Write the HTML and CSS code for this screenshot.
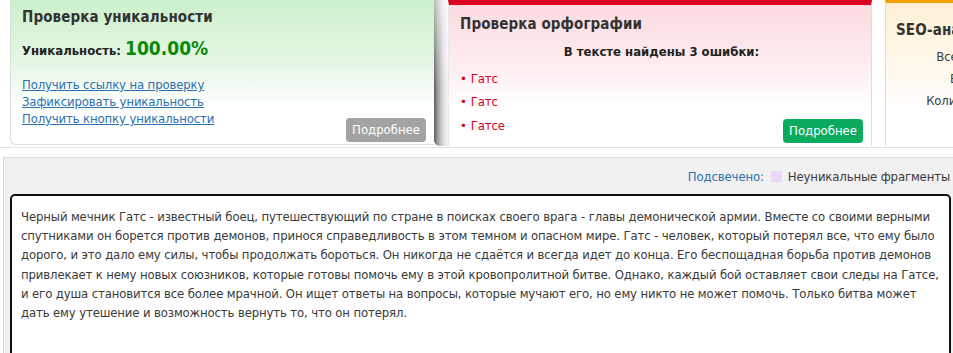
FILE: index.html
```html
<!DOCTYPE html>
<html lang="ru">
<head>
    <meta charset="UTF-8">
    <title>Проверка текста</title>
    <link rel="stylesheet" href="styles.css">
</head>
<body>
    <div class="cards">
        <div class="card card-unique">
            <h2 class="card-title">Проверка уникальности</h2>
            <p class="uniq-line">Уникальность: <span class="uniq-value">100.00%</span></p>
            <div class="card-foot">
                <ul class="links">
                    <li><a href="#">Получить ссылку на проверку</a></li>
                    <li><a href="#">Зафиксировать уникальность</a></li>
                    <li><a href="#">Получить кнопку уникальности</a></li>
                </ul>
                <a href="#" class="more-btn more-gray">Подробнее</a>
            </div>
        </div>

        <div class="card-spell-wrap">
            <div class="fold"></div>
            <div class="card card-spell">
                <h2 class="card-title">Проверка орфографии</h2>
                <p class="errors-head">В тексте найдены 3 ошибки:</p>
                <div class="card-foot">
                    <ul class="errors">
                        <li>Гатс</li>
                        <li>Гатс</li>
                        <li>Гатсе</li>
                    </ul>
                    <a href="#" class="more-btn more-green">Подробнее</a>
                </div>
            </div>
        </div>

        <div class="card card-seo">
            <h2 class="card-title">SEO-анализ</h2>
            <ul class="seo-list">
                <li>Всего символов</li>
                <li>Без пробелов</li>
                <li>Количество слов</li>
            </ul>
        </div>
    </div>

    <div class="check">
        <div class="legend">
            <span class="legend-label">Подсвечено:</span>
            <span class="legend-box"></span>
            <span>Неуникальные фрагменты</span>
        </div>
        <div class="text-box">Черный мечник Гатс - известный боец, путешествующий по стране в поисках своего врага - главы демонической армии. Вместе со своими верными<br>
спутниками он борется против демонов, принося справедливость в этом темном и опасном мире. Гатс - человек, который потерял все, что ему было<br>
дорого, и это дало ему силы, чтобы продолжать бороться. Он никогда не сдаётся и всегда идет до конца. Его беспощадная борьба против демонов<br>
привлекает к нему новых союзников, которые готовы помочь ему в этой кровопролитной битве. Однако, каждый бой оставляет свои следы на Гатсе,<br>
и его душа становится все более мрачной. Он ищет ответы на вопросы, которые мучают его, но ему никто не может помочь. Только битва может<br>
дать ему утешение и возможность вернуть то, что он потерял.</div>
    </div>
</body>
</html>
```

FILE: styles.css
```css
* {
    margin: 0;
    padding: 0;
    box-sizing: border-box;
}

body {
    font-family: "DejaVu Sans Condensed", "DejaVu Sans", sans-serif;
    font-stretch: condensed;
    font-size: 13px;
    letter-spacing: -0.13px;
    color: #3a3a3a;
    background: #fff;
    width: 953px;
    height: 353px;
    overflow: hidden;
}

ul {
    list-style: none;
}

.cards {
    display: flex;
    align-items: flex-start;
    height: 148px;
    border-bottom: 1px solid #e2e2e2;
    overflow: hidden;
}

.card {
    position: relative;
    height: 146px;
}

.card-title {
    font-size: 15px;
    font-weight: bold;
    letter-spacing: 0.1px;
    color: #333;
}

/* uniqueness */
.card-unique {
    width: 424px;
    margin-left: 10px;
    padding: 8px 8px 2px 11px;
    border-left: 1px solid #dcdcdc;
    border-bottom: 1px solid #dcdcdc;
    border-bottom-left-radius: 6px;
    background: linear-gradient(to bottom, #ccf0cc 0%, #e6f7e6 45%, #fff 75%);
    height: 145px;
    display: flex;
    flex-direction: column;
}

.uniq-line {
    margin-top: 11px;
    font-weight: bold;
    letter-spacing: 0;
    color: #222;
}

.uniq-value {
    font-size: 19px;
    color: #0a8a0a;
}

.card-foot {
    margin-top: auto;
    display: flex;
    justify-content: space-between;
    align-items: flex-end;
}

.links {
    line-height: 17px;
    margin-bottom: 15px;
}

.links a {
    color: #2c70ad;
}

.more-btn {
    display: inline-block;
    padding: 0 6px;
    height: 24px;
    line-height: 24px;
    border-radius: 4px;
    color: #fff;
    text-decoration: none;
    font-size: 13px;
    letter-spacing: 0;
}

.more-gray {
    background: #a3a3a3;
}

.more-green {
    background: #0aab5f;
}

/* spelling */
.card-spell-wrap {
    display: flex;
    height: 147px;
}

.fold {
    width: 14px;
    height: 146px;
    border-bottom-left-radius: 6px;
    background:
        linear-gradient(to bottom, rgba(255, 255, 255, 0.6) 0%, rgba(255, 255, 255, 0) 60%),
        linear-gradient(to right, #5a5a5a 0%, #9a9a9a 25%, #dcdcdc 65%, #f6f6f6 100%);
}

.card-spell {
    width: 424px;
    padding: 10px 8px 3px 11px;
    border-top: 5px solid #dc0020;
    border-right: 1px solid #dcdcdc;
    border-left: 1px solid #e8e8e8;
    background: linear-gradient(to bottom, #fbdbe0 0%, #fdeef0 45%, #fff 72%);
    display: flex;
    flex-direction: column;
}

.errors-head {
    margin-top: 11px;
    text-align: center;
    font-weight: bold;
    letter-spacing: 0;
    color: #222;
}

.errors {
    line-height: 23.5px;
    color: #dc0020;
    margin-bottom: 6px;
}

.errors li::before {
    content: "•";
    margin-right: 4px;
}

/* seo */
.card-seo {
    flex: 1;
    margin-left: 13px;
    padding: 18px 10px 0 10px;
    border-top: 3px solid #f6a000;
    border-left: 1px solid #dcdcdc;
    background: linear-gradient(to bottom, #fff0d6 0%, #fff8ec 45%, #fff 75%);
    white-space: nowrap;
    overflow: hidden;
}

.seo-list {
    margin-top: 7px;
    margin-left: 38px;
    line-height: 22px;
    text-align: center;
    width: 100px;
}

.seo-list li:nth-child(2) {
    padding-left: 14px;
}

.seo-list li:nth-child(3) {
    margin-left: -14px;
}

/* check area */
.check {
    margin: 9px 0 0 3px;
    background: #f1f1f1;
    border-top: 1px solid #dcdcdc;
    border-left: 1px solid #dcdcdc;
    height: 200px;
    padding: 0 0 0 6px;
}

.legend {
    display: flex;
    justify-content: flex-end;
    align-items: center;
    height: 36px;
    padding-right: 3px;
}

.legend-box {
    width: 11px;
    height: 11px;
    background: #ead8fc;
    margin: 0 6px 0 7px;
}

.legend-label {
    color: #2c70ad;
}

.text-box {
    width: 941px;
    height: 170px;
    background: #fff;
    border: 2px solid #111;
    border-radius: 5px;
    padding: 11px 9px;
    line-height: 19.2px;
    color: #3a3a3a;
    white-space: nowrap;
    overflow: hidden;
}
```
